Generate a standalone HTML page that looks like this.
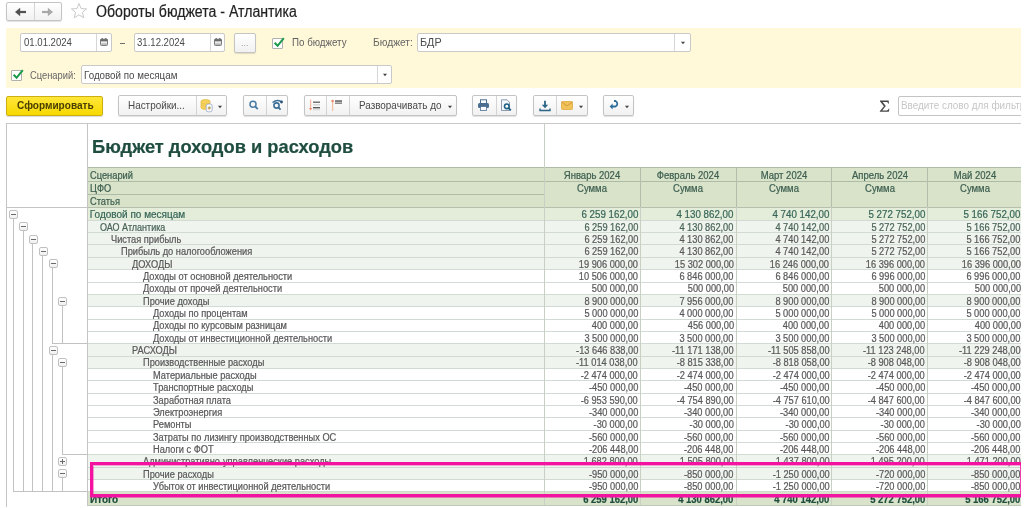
<!DOCTYPE html>
<html><head><meta charset="utf-8"><style>
html,body{margin:0;padding:0;}
body{width:1024px;height:508px;overflow:hidden;background:#fff;position:relative;font-family:"Liberation Sans", sans-serif;}
.a{position:absolute;}
.t{white-space:nowrap;line-height:1;}
.tb .t{-webkit-text-stroke:0.22px currentColor;}
</style></head><body><div id="root" style="position:absolute;left:0;top:0;width:1024px;height:508px;filter:blur(0.3px)">
<div class="a" style="left:6.00px;top:2.00px;width:56.00px;height:19.00px;border:1px solid #c4c4c4;border-radius:2px;background:linear-gradient(#ffffff,#f1f1f1);box-shadow:0 1px 1px rgba(0,0,0,.12);box-sizing:border-box;"></div>
<div class="a" style="left:34.00px;top:3.00px;width:1.00px;height:17.00px;background:#d4d4d4"></div>
<svg class="a" style="left:14px;top:7px" width="13" height="10" viewBox="0 0 13 10"><path d="M12 5H5" stroke="#505050" stroke-width="2.2" fill="none"/><path d="M1 5L6.2 0.8V9.2Z" fill="#505050"/></svg>
<svg class="a" style="left:41px;top:7px" width="13" height="10" viewBox="0 0 13 10"><path d="M1 5H8" stroke="#a8a8a8" stroke-width="2.2" fill="none"/><path d="M12 5L6.8 0.8V9.2Z" fill="#a8a8a8"/></svg>
<svg class="a" style="left:70px;top:2px" width="18" height="18" viewBox="0 0 18 18"><path d="M9 1.5L11.1 6.6L16.6 6.9L12.4 10.4L13.8 15.8L9 12.8L4.2 15.8L5.6 10.4L1.4 6.9L6.9 6.6Z" stroke="#c8c8c8" stroke-width="1" fill="#fff"/></svg>
<div class="a t" style="left:95.90px;top:3.79px;font-size:15.6px;color:#222222;font-weight:400;transform:scaleX(0.905);transform-origin:0 0;-webkit-text-stroke:0.2px #222">Обороты бюджета - Атлантика</div>
<div class="a" style="left:6.25px;top:28.30px;width:1014.75px;height:59.90px;background:#fff8d9"></div>
<div class="a" style="left:20.30px;top:33.00px;width:92.20px;height:18.50px;border:1px solid #c9c9c9;background:#fff;box-sizing:border-box;border-radius:2px;"></div>
<div class="a" style="left:96.00px;top:34.00px;width:1.00px;height:16.50px;background:#d6d6d6"></div>
<div class="a t" style="left:23.50px;top:37.19px;font-size:11px;color:#4a4a4a;font-weight:400;transform:scaleX(0.87);transform-origin:0 0;">01.01.2024</div>
<svg class="a" style="left:100.2px;top:37.6px" width="8" height="8" viewBox="0 0 8 8"><rect x="0.5" y="1.2" width="7" height="6.3" rx="0.8" fill="#fff" stroke="#707070" stroke-width="0.9"/><rect x="0.5" y="1.2" width="7" height="2.2" fill="#6a6a6a"/><rect x="1.6" y="0" width="1.2" height="1.6" fill="#6a6a6a"/><rect x="5.2" y="0" width="1.2" height="1.6" fill="#6a6a6a"/><path d="M1 5.2H7M1 6.5H7" stroke="#9a9a9a" stroke-width="0.7"/></svg>
<div class="a" style="left:120.30px;top:42.60px;width:5.10px;height:1.10px;background:#707070"></div>
<div class="a" style="left:133.80px;top:33.00px;width:91.40px;height:18.50px;border:1px solid #c9c9c9;background:#fff;box-sizing:border-box;border-radius:2px;"></div>
<div class="a" style="left:209.70px;top:34.00px;width:1.00px;height:16.50px;background:#d6d6d6"></div>
<div class="a t" style="left:137.00px;top:37.19px;font-size:11px;color:#4a4a4a;font-weight:400;transform:scaleX(0.87);transform-origin:0 0;">31.12.2024</div>
<svg class="a" style="left:213.9px;top:37.6px" width="8" height="8" viewBox="0 0 8 8"><rect x="0.5" y="1.2" width="7" height="6.3" rx="0.8" fill="#fff" stroke="#707070" stroke-width="0.9"/><rect x="0.5" y="1.2" width="7" height="2.2" fill="#6a6a6a"/><rect x="1.6" y="0" width="1.2" height="1.6" fill="#6a6a6a"/><rect x="5.2" y="0" width="1.2" height="1.6" fill="#6a6a6a"/><path d="M1 5.2H7M1 6.5H7" stroke="#9a9a9a" stroke-width="0.7"/></svg>
<div class="a" style="left:233.80px;top:32.60px;width:21.90px;height:20.00px;border:1px solid #c4c4c4;border-radius:2px;background:linear-gradient(#ffffff,#f1f1f1);box-shadow:0 1px 1px rgba(0,0,0,.12);box-sizing:border-box;"></div>
<div class="a t" style="left:-55.30px;width:600px;text-align:center;top:38.88px;font-size:9px;color:#a0a0a0;font-weight:400;transform:scaleX(1.0);transform-origin:50% 0;">...</div>
<div class="a" style="left:272.00px;top:37.50px;width:11.00px;height:11.00px;border:1px solid #b0b0b0;background:#fff;box-sizing:border-box;border-radius:1px;"></div>
<svg class="a" style="left:272.00px;top:35.50px" width="13" height="13" viewBox="0 0 13 13"><path d="M2.6 6.8L5.6 9.8L11.8 2.2" stroke="#1c9a4c" stroke-width="2.1" fill="none"/></svg>
<div class="a t" style="left:292.20px;top:37.09px;font-size:11px;color:#5f5f5f;font-weight:400;transform:scaleX(0.886);transform-origin:0 0;">По бюджету</div>
<div class="a t" style="left:373.30px;top:37.09px;font-size:11px;color:#666666;font-weight:400;transform:scaleX(0.93);transform-origin:0 0;">Бюджет:</div>
<div class="a" style="left:417.10px;top:33.00px;width:273.90px;height:18.90px;border:1px solid #c9c9c9;background:#fff;box-sizing:border-box;border-radius:2px;"></div>
<div class="a" style="left:673.70px;top:34.00px;width:1.00px;height:16.90px;background:#d6d6d6"></div>
<div class="a t" style="left:420.00px;top:37.09px;font-size:11px;color:#4a4a4a;font-weight:400;transform:scaleX(0.98);transform-origin:0 0;">БДР</div>
<svg class="a" style="left:679.50px;top:40.50px" width="6" height="4" viewBox="0 0 6 4"><path d="M1 0.8H5L3 3.2Z" fill="#404040"/></svg>
<div class="a" style="left:10.50px;top:69.50px;width:11.00px;height:11.00px;border:1px solid #b0b0b0;background:#fff;box-sizing:border-box;border-radius:1px;"></div>
<svg class="a" style="left:10.50px;top:67.50px" width="13" height="13" viewBox="0 0 13 13"><path d="M2.6 6.8L5.6 9.8L11.8 2.2" stroke="#1c9a4c" stroke-width="2.1" fill="none"/></svg>
<div class="a t" style="left:30.30px;top:70.19px;font-size:11px;color:#666666;font-weight:400;transform:scaleX(0.85);transform-origin:0 0;">Сценарий:</div>
<div class="a" style="left:81.00px;top:65.40px;width:310.80px;height:19.00px;border:1px solid #c9c9c9;background:#fff;box-sizing:border-box;border-radius:2px;"></div>
<div class="a" style="left:377.00px;top:66.40px;width:1.00px;height:17.00px;background:#d6d6d6"></div>
<div class="a t" style="left:84.00px;top:70.19px;font-size:11px;color:#4a4a4a;font-weight:400;transform:scaleX(0.89);transform-origin:0 0;">Годовой по месяцам</div>
<svg class="a" style="left:381.70px;top:73.00px" width="6" height="4" viewBox="0 0 6 4"><path d="M1 0.8H5L3 3.2Z" fill="#404040"/></svg>
<div class="a" style="left:6.00px;top:95.50px;width:97.10px;height:20.00px;border:1px solid #cdb010;border-radius:2px;background:linear-gradient(#ffe63a,#f7d900);box-sizing:border-box;box-shadow:0 1px 1px rgba(0,0,0,.15)"></div>
<div class="a t" style="left:16.60px;top:100.12px;font-size:11.2px;color:#4a3f00;font-weight:700;transform:scaleX(0.9);transform-origin:0 0;">Сформировать</div>
<div class="a" style="left:118.30px;top:95.40px;width:109.00px;height:20.20px;border:1px solid #c4c4c4;border-radius:2px;background:linear-gradient(#ffffff,#f1f1f1);box-shadow:0 1px 1px rgba(0,0,0,.12);box-sizing:border-box;"></div>
<div class="a" style="left:196.40px;top:96.00px;width:1.00px;height:19.00px;background:#d3d3d3"></div>
<div class="a t" style="left:128.40px;top:99.99px;font-size:11px;color:#4a4a4a;font-weight:400;transform:scaleX(0.9);transform-origin:0 0;">Настройки...</div>
<svg class="a" style="left:199.5px;top:98.5px" width="14" height="14" viewBox="0 0 14 14"><path d="M1 2.2Q1 0.6 5.5 0.6Q10 0.6 10 2.2V8.8Q10 10.4 5.5 10.4Q1 10.4 1 8.8Z" fill="#f6d25a" stroke="#e2b43c" stroke-width="0.7"/><path d="M1 4.3Q5.5 5.8 10 4.3M1 6.6Q5.5 8.1 10 6.6" stroke="#e8c050" stroke-width="0.8" fill="none"/><rect x="6.2" y="5" width="6" height="7.8" rx="2" fill="#fbfbfd" stroke="#9aa8c8" stroke-width="0.8"/><circle cx="9.2" cy="9" r="1.5" fill="#d9a860"/><path d="M9.2 9V7.5A1.5 1.5 0 0 1 10.7 9Z" fill="#7cb870"/></svg>
<svg class="a" style="left:217.00px;top:104.50px" width="6" height="4" viewBox="0 0 6 4"><path d="M1 0.8H5L3 3.2Z" fill="#404040"/></svg>
<div class="a" style="left:243.20px;top:95.40px;width:44.80px;height:20.20px;border:1px solid #c4c4c4;border-radius:2px;background:linear-gradient(#ffffff,#f1f1f1);box-shadow:0 1px 1px rgba(0,0,0,.12);box-sizing:border-box;"></div>
<div class="a" style="left:265.90px;top:96.00px;width:1.00px;height:19.00px;background:#d3d3d3"></div>
<svg class="a" style="left:248px;top:99px" width="12" height="12" viewBox="0 0 12 12"><circle cx="5" cy="5.2" r="3" stroke="#4a7ca4" stroke-width="1.5" fill="none"/><path d="M7.2 7.5L9.8 10.1" stroke="#4a7ca4" stroke-width="1.8"/></svg>
<svg class="a" style="left:271px;top:99px" width="13" height="12" viewBox="0 0 13 12"><circle cx="5.5" cy="6.5" r="2.6" stroke="#3c6f98" stroke-width="1.6" fill="none"/><path d="M7.3 8.4L9.6 10.7" stroke="#3c6f98" stroke-width="1.8"/><path d="M1.5 3.5Q6 0 10 2.5" stroke="#3c6f98" stroke-width="1.4" fill="none"/><circle cx="10.5" cy="3" r="1.4" fill="#234f78"/></svg>
<div class="a" style="left:303.80px;top:95.40px;width:153.10px;height:20.20px;border:1px solid #c4c4c4;border-radius:2px;background:linear-gradient(#ffffff,#f1f1f1);box-shadow:0 1px 1px rgba(0,0,0,.12);box-sizing:border-box;"></div>
<div class="a" style="left:326.30px;top:96.00px;width:1.00px;height:19.00px;background:#d3d3d3"></div>
<div class="a" style="left:349.30px;top:96.00px;width:1.00px;height:19.00px;background:#d3d3d3"></div>
<svg class="a" style="left:307px;top:98px" width="16" height="14" viewBox="0 0 16 14"><path d="M3.6 1.5V11" stroke="#f4b8a4" stroke-width="1.3"/><path d="M2 10L3.6 12.5L5.2 10Z" fill="#ec8a70"/><rect x="6" y="3.5" width="7" height="1.4" fill="#6a6a6a"/><rect x="6" y="6.2" width="7" height="1.2" fill="#d0d0d0"/><rect x="6" y="9" width="7" height="1.4" fill="#5a5a5a"/><rect x="6" y="11.3" width="7" height="1" fill="#d4d4d4"/></svg>
<svg class="a" style="left:329px;top:98px" width="16" height="14" viewBox="0 0 16 14"><path d="M3.6 3V13" stroke="#f4c0a8" stroke-width="1.3"/><circle cx="3.6" cy="3" r="1.3" fill="#ec8a70"/><rect x="6" y="2.3" width="7" height="1.5" fill="#5a5a5a"/><rect x="6" y="4.4" width="7" height="1.6" fill="#8a8a8a"/></svg>
<div class="a t" style="left:358.90px;top:99.99px;font-size:11px;color:#4a4a4a;font-weight:400;transform:scaleX(0.9);transform-origin:0 0;">Разворачивать до</div>
<svg class="a" style="left:446.50px;top:104.50px" width="6" height="4" viewBox="0 0 6 4"><path d="M1 0.8H5L3 3.2Z" fill="#404040"/></svg>
<div class="a" style="left:472.20px;top:95.40px;width:45.20px;height:20.20px;border:1px solid #c4c4c4;border-radius:2px;background:linear-gradient(#ffffff,#f1f1f1);box-shadow:0 1px 1px rgba(0,0,0,.12);box-sizing:border-box;"></div>
<div class="a" style="left:495.60px;top:96.00px;width:1.00px;height:19.00px;background:#d3d3d3"></div>
<svg class="a" style="left:477px;top:99px" width="13" height="12" viewBox="0 0 13 12"><rect x="3.5" y="0.8" width="6" height="4" fill="#fff" stroke="#4a6f90" stroke-width="1"/><rect x="1" y="4" width="11" height="5" rx="1.5" fill="#4a6f90"/><rect x="3.5" y="7.5" width="6" height="4" fill="#fff" stroke="#4a6f90" stroke-width="0.8"/></svg>
<svg class="a" style="left:500px;top:99px" width="13" height="13" viewBox="0 0 13 13"><path d="M1.5 0.8H7L9.5 3.3V11.5H1.5Z" fill="#f4f7fb" stroke="#8090a8" stroke-width="0.9"/><circle cx="6.8" cy="7.3" r="2.3" stroke="#1f5f85" stroke-width="1.6" fill="#fff"/><path d="M8.5 9L10.8 11.3" stroke="#1f5f85" stroke-width="1.8"/></svg>
<div class="a" style="left:533.30px;top:95.40px;width:54.30px;height:20.20px;border:1px solid #c4c4c4;border-radius:2px;background:linear-gradient(#ffffff,#f1f1f1);box-shadow:0 1px 1px rgba(0,0,0,.12);box-sizing:border-box;"></div>
<div class="a" style="left:556.20px;top:96.00px;width:1.00px;height:19.00px;background:#d3d3d3"></div>
<svg class="a" style="left:538.5px;top:99.5px" width="12" height="12" viewBox="0 0 12 12"><path d="M6 0.8V7" stroke="#2b6484" stroke-width="1.8"/><path d="M2.8 4.8L6 8.2L9.2 4.8Z" fill="#2b6484"/><path d="M1 8.5V10.5H11V8.5" stroke="#2b6484" stroke-width="1.4" fill="none"/></svg>
<svg class="a" style="left:560.5px;top:101px" width="12" height="9" viewBox="0 0 12 9"><rect x="0.5" y="0.5" width="11" height="8" rx="1" fill="#f2c25a" stroke="#e0a840" stroke-width="0.8"/><path d="M0.8 1L6 5L11.2 1" stroke="#c89030" stroke-width="0.8" fill="none"/></svg>
<svg class="a" style="left:577.50px;top:104.50px" width="6" height="4" viewBox="0 0 6 4"><path d="M1 0.8H5L3 3.2Z" fill="#404040"/></svg>
<div class="a" style="left:603.30px;top:95.40px;width:31.00px;height:20.20px;border:1px solid #c4c4c4;border-radius:2px;background:linear-gradient(#ffffff,#f1f1f1);box-shadow:0 1px 1px rgba(0,0,0,.12);box-sizing:border-box;"></div>
<svg class="a" style="left:609px;top:99.5px" width="11" height="11" viewBox="0 0 11 11"><path d="M3 6.5H6.5A3 3 0 0 0 6.5 1H5" stroke="#2e6f9a" stroke-width="1.8" fill="none"/><path d="M0.6 6.5L3.6 3.6V9.4Z" fill="#2e6f9a"/></svg>
<svg class="a" style="left:624.30px;top:104.50px" width="6" height="4" viewBox="0 0 6 4"><path d="M1 0.8H5L3 3.2Z" fill="#404040"/></svg>
<svg class="a" style="left:879px;top:100px" width="11" height="12.5" viewBox="0 0 11 12.5"><path d="M1 0.6H9.6L10 3.4H9.2Q8.8 2 7.4 2H3.6L6.8 6L3.2 10.4H7.8Q9.2 10.4 9.7 8.8H10.4L9.8 11.8H0.8V11.2L4.9 6.2L0.9 1.2Z" fill="#474747"/></svg>
<div class="a" style="left:898.40px;top:95.60px;width:131.60px;height:20.00px;border:1px solid #c4c4c4;border-radius:2px;background:#fff;box-sizing:border-box"></div>
<div class="a t" style="left:901.00px;top:100.19px;font-size:11px;color:#c6c6c6;font-weight:400;transform:scaleX(0.9);transform-origin:0 0;">Введите слово для фильтр</div>
<div class="a tb" style="left:0;top:0;width:1024px;height:508px;clip-path:inset(0 3px 0 0)">
<div class="a" style="left:544.50px;top:167.80px;width:476.50px;height:39.40px;background:#d8e3c9"></div>
<div class="a" style="left:87.40px;top:167.80px;width:457.10px;height:39.40px;background:#d8e3c9"></div>
<div class="a" style="left:87.40px;top:207.20px;width:933.60px;height:13.10px;background:#e3edd9"></div>
<div class="a" style="left:87.40px;top:220.30px;width:933.60px;height:12.34px;background:#eff4ef"></div>
<div class="a" style="left:87.40px;top:232.64px;width:933.60px;height:12.34px;background:#eff4ef"></div>
<div class="a" style="left:87.40px;top:244.98px;width:933.60px;height:12.34px;background:#eff4ef"></div>
<div class="a" style="left:87.40px;top:257.32px;width:933.60px;height:12.34px;background:#eff4ef"></div>
<div class="a" style="left:87.40px;top:269.66px;width:933.60px;height:12.34px;background:#ffffff"></div>
<div class="a" style="left:87.40px;top:282.00px;width:933.60px;height:12.34px;background:#ffffff"></div>
<div class="a" style="left:87.40px;top:294.34px;width:933.60px;height:12.34px;background:#eff4ef"></div>
<div class="a" style="left:87.40px;top:306.68px;width:933.60px;height:12.34px;background:#ffffff"></div>
<div class="a" style="left:87.40px;top:319.02px;width:933.60px;height:12.34px;background:#ffffff"></div>
<div class="a" style="left:87.40px;top:331.36px;width:933.60px;height:12.34px;background:#ffffff"></div>
<div class="a" style="left:87.40px;top:343.70px;width:933.60px;height:12.34px;background:#eff4ef"></div>
<div class="a" style="left:87.40px;top:356.04px;width:933.60px;height:12.34px;background:#eff4ef"></div>
<div class="a" style="left:87.40px;top:368.38px;width:933.60px;height:12.34px;background:#ffffff"></div>
<div class="a" style="left:87.40px;top:380.72px;width:933.60px;height:12.34px;background:#ffffff"></div>
<div class="a" style="left:87.40px;top:393.06px;width:933.60px;height:12.34px;background:#ffffff"></div>
<div class="a" style="left:87.40px;top:405.40px;width:933.60px;height:12.34px;background:#ffffff"></div>
<div class="a" style="left:87.40px;top:417.74px;width:933.60px;height:12.34px;background:#ffffff"></div>
<div class="a" style="left:87.40px;top:430.08px;width:933.60px;height:12.34px;background:#ffffff"></div>
<div class="a" style="left:87.40px;top:442.42px;width:933.60px;height:12.34px;background:#ffffff"></div>
<div class="a" style="left:87.40px;top:454.76px;width:933.60px;height:12.34px;background:#eff4ef"></div>
<div class="a" style="left:87.40px;top:467.10px;width:933.60px;height:12.34px;background:#eff4ef"></div>
<div class="a" style="left:87.40px;top:479.44px;width:933.60px;height:12.34px;background:#ffffff"></div>
<div class="a" style="left:87.40px;top:491.78px;width:933.60px;height:13.52px;background:#d8e3c9"></div>
<div class="a" style="left:6.50px;top:122.50px;width:1014.50px;height:1.00px;background:#c8c8c8"></div>
<div class="a" style="left:87.40px;top:167.30px;width:933.60px;height:1.00px;background:#aebba6"></div>
<div class="a" style="left:87.40px;top:180.50px;width:933.60px;height:1.00px;background:#aebba6"></div>
<div class="a" style="left:87.40px;top:193.70px;width:457.10px;height:1.00px;background:#aebba6"></div>
<div class="a" style="left:6.50px;top:206.70px;width:80.90px;height:1.00px;background:#c4c4c4"></div>
<div class="a" style="left:87.40px;top:206.70px;width:933.60px;height:1.00px;background:#b5bfae"></div>
<div class="a" style="left:87.40px;top:219.80px;width:933.60px;height:1.00px;background:#d2dbd3"></div>
<div class="a" style="left:87.40px;top:232.14px;width:933.60px;height:1.00px;background:#d2dbd3"></div>
<div class="a" style="left:87.40px;top:244.48px;width:933.60px;height:1.00px;background:#d2dbd3"></div>
<div class="a" style="left:87.40px;top:256.82px;width:933.60px;height:1.00px;background:#d2dbd3"></div>
<div class="a" style="left:87.40px;top:269.16px;width:933.60px;height:1.00px;background:#d2dbd3"></div>
<div class="a" style="left:87.40px;top:281.50px;width:933.60px;height:1.00px;background:#d2dbd3"></div>
<div class="a" style="left:87.40px;top:293.84px;width:933.60px;height:1.00px;background:#d2dbd3"></div>
<div class="a" style="left:87.40px;top:306.18px;width:933.60px;height:1.00px;background:#d2dbd3"></div>
<div class="a" style="left:87.40px;top:318.52px;width:933.60px;height:1.00px;background:#d2dbd3"></div>
<div class="a" style="left:87.40px;top:330.86px;width:933.60px;height:1.00px;background:#d2dbd3"></div>
<div class="a" style="left:87.40px;top:343.20px;width:933.60px;height:1.00px;background:#d2dbd3"></div>
<div class="a" style="left:87.40px;top:355.54px;width:933.60px;height:1.00px;background:#d2dbd3"></div>
<div class="a" style="left:87.40px;top:367.88px;width:933.60px;height:1.00px;background:#d2dbd3"></div>
<div class="a" style="left:87.40px;top:380.22px;width:933.60px;height:1.00px;background:#d2dbd3"></div>
<div class="a" style="left:87.40px;top:392.56px;width:933.60px;height:1.00px;background:#d2dbd3"></div>
<div class="a" style="left:87.40px;top:404.90px;width:933.60px;height:1.00px;background:#d2dbd3"></div>
<div class="a" style="left:87.40px;top:417.24px;width:933.60px;height:1.00px;background:#d2dbd3"></div>
<div class="a" style="left:87.40px;top:429.58px;width:933.60px;height:1.00px;background:#d2dbd3"></div>
<div class="a" style="left:87.40px;top:441.92px;width:933.60px;height:1.00px;background:#d2dbd3"></div>
<div class="a" style="left:87.40px;top:454.26px;width:933.60px;height:1.00px;background:#d2dbd3"></div>
<div class="a" style="left:87.40px;top:466.60px;width:933.60px;height:1.00px;background:#d2dbd3"></div>
<div class="a" style="left:87.40px;top:478.94px;width:933.60px;height:1.00px;background:#d2dbd3"></div>
<div class="a" style="left:87.40px;top:491.28px;width:933.60px;height:1.00px;background:#d2dbd3"></div>
<div class="a" style="left:87.40px;top:504.80px;width:933.60px;height:1.00px;background:#c0c8bc"></div>
<div class="a" style="left:6.00px;top:123.00px;width:1.00px;height:383.70px;background:#c4c4c4"></div>
<div class="a" style="left:86.90px;top:123.00px;width:1.00px;height:382.30px;background:#c4c4c4"></div>
<div class="a" style="left:544.00px;top:123.00px;width:1.00px;height:382.30px;background:#c8cfc4"></div>
<div class="a" style="left:639.80px;top:167.80px;width:1.00px;height:337.50px;background:#c8d0c4"></div>
<div class="a" style="left:639.80px;top:167.80px;width:1.00px;height:39.40px;background:#b4bfab"></div>
<div class="a" style="left:735.50px;top:167.80px;width:1.00px;height:337.50px;background:#c8d0c4"></div>
<div class="a" style="left:735.50px;top:167.80px;width:1.00px;height:39.40px;background:#b4bfab"></div>
<div class="a" style="left:831.20px;top:167.80px;width:1.00px;height:337.50px;background:#c8d0c4"></div>
<div class="a" style="left:831.20px;top:167.80px;width:1.00px;height:39.40px;background:#b4bfab"></div>
<div class="a" style="left:926.80px;top:167.80px;width:1.00px;height:337.50px;background:#c8d0c4"></div>
<div class="a" style="left:926.80px;top:167.80px;width:1.00px;height:39.40px;background:#b4bfab"></div>
<div class="a t" style="left:89.50px;top:170.73px;font-size:10px;color:#3d5e50;font-weight:400;transform:scaleX(0.93);transform-origin:0 0;">Сценарий</div>
<div class="a t" style="left:89.50px;top:183.84px;font-size:10px;color:#3d5e50;font-weight:400;transform:scaleX(0.93);transform-origin:0 0;">ЦФО</div>
<div class="a t" style="left:89.50px;top:196.94px;font-size:10px;color:#3d5e50;font-weight:400;transform:scaleX(0.93);transform-origin:0 0;">Статья</div>
<div class="a t" style="left:292.40px;width:600px;text-align:center;top:170.63px;font-size:10px;color:#3d5e50;font-weight:400;transform:scaleX(0.95);transform-origin:50% 0;">Январь 2024</div>
<div class="a t" style="left:292.40px;width:600px;text-align:center;top:184.13px;font-size:10px;color:#3d5e50;font-weight:400;transform:scaleX(0.95);transform-origin:50% 0;">Сумма</div>
<div class="a t" style="left:388.15px;width:600px;text-align:center;top:170.63px;font-size:10px;color:#3d5e50;font-weight:400;transform:scaleX(0.95);transform-origin:50% 0;">Февраль 2024</div>
<div class="a t" style="left:388.15px;width:600px;text-align:center;top:184.13px;font-size:10px;color:#3d5e50;font-weight:400;transform:scaleX(0.95);transform-origin:50% 0;">Сумма</div>
<div class="a t" style="left:483.85px;width:600px;text-align:center;top:170.63px;font-size:10px;color:#3d5e50;font-weight:400;transform:scaleX(0.95);transform-origin:50% 0;">Март 2024</div>
<div class="a t" style="left:483.85px;width:600px;text-align:center;top:184.13px;font-size:10px;color:#3d5e50;font-weight:400;transform:scaleX(0.95);transform-origin:50% 0;">Сумма</div>
<div class="a t" style="left:579.50px;width:600px;text-align:center;top:170.63px;font-size:10px;color:#3d5e50;font-weight:400;transform:scaleX(0.95);transform-origin:50% 0;">Апрель 2024</div>
<div class="a t" style="left:579.50px;width:600px;text-align:center;top:184.13px;font-size:10px;color:#3d5e50;font-weight:400;transform:scaleX(0.95);transform-origin:50% 0;">Сумма</div>
<div class="a t" style="left:675.15px;width:600px;text-align:center;top:170.63px;font-size:10px;color:#3d5e50;font-weight:400;transform:scaleX(0.95);transform-origin:50% 0;">Май 2024</div>
<div class="a t" style="left:675.15px;width:600px;text-align:center;top:184.13px;font-size:10px;color:#3d5e50;font-weight:400;transform:scaleX(0.95);transform-origin:50% 0;">Сумма</div>
<div class="a t" style="left:91.80px;top:137.79px;font-size:18.2px;color:#1f4d3f;font-weight:700;transform:scaleX(1.006);transform-origin:0 0;">Бюджет доходов и расходов</div>
<div class="a t" style="left:89.80px;top:210.33px;font-size:10px;color:#38665a;font-weight:400;transform:scaleX(1.0);transform-origin:0 0;">Годовой по месяцам</div>
<div class="a t" style="right:386.00px;top:210.33px;font-size:10px;color:#38665a;font-weight:400;transform:scaleX(0.975);transform-origin:100% 0;">6 259 162,00</div>
<div class="a t" style="right:290.30px;top:210.33px;font-size:10px;color:#38665a;font-weight:400;transform:scaleX(0.975);transform-origin:100% 0;">4 130 862,00</div>
<div class="a t" style="right:194.60px;top:210.33px;font-size:10px;color:#38665a;font-weight:400;transform:scaleX(0.975);transform-origin:100% 0;">4 740 142,00</div>
<div class="a t" style="right:99.00px;top:210.33px;font-size:10px;color:#38665a;font-weight:400;transform:scaleX(0.975);transform-origin:100% 0;">5 272 752,00</div>
<div class="a t" style="right:3.30px;top:210.33px;font-size:10px;color:#38665a;font-weight:400;transform:scaleX(0.975);transform-origin:100% 0;">5 166 752,00</div>
<div class="a t" style="left:100.35px;top:222.53px;font-size:10px;color:#4a6459;font-weight:400;transform:scaleX(0.9);transform-origin:0 0;">ОАО Атлантика</div>
<div class="a t" style="right:386.00px;top:222.53px;font-size:10px;color:#4a6459;font-weight:400;transform:scaleX(0.925);transform-origin:100% 0;">6 259 162,00</div>
<div class="a t" style="right:290.30px;top:222.53px;font-size:10px;color:#4a6459;font-weight:400;transform:scaleX(0.925);transform-origin:100% 0;">4 130 862,00</div>
<div class="a t" style="right:194.60px;top:222.53px;font-size:10px;color:#4a6459;font-weight:400;transform:scaleX(0.925);transform-origin:100% 0;">4 740 142,00</div>
<div class="a t" style="right:99.00px;top:222.53px;font-size:10px;color:#4a6459;font-weight:400;transform:scaleX(0.925);transform-origin:100% 0;">5 272 752,00</div>
<div class="a t" style="right:3.30px;top:222.53px;font-size:10px;color:#4a6459;font-weight:400;transform:scaleX(0.925);transform-origin:100% 0;">5 166 752,00</div>
<div class="a t" style="left:110.90px;top:235.08px;font-size:10px;color:#595959;font-weight:400;transform:scaleX(0.925);transform-origin:0 0;">Чистая прибыль</div>
<div class="a t" style="right:386.00px;top:235.08px;font-size:10px;color:#595959;font-weight:400;transform:scaleX(0.925);transform-origin:100% 0;">6 259 162,00</div>
<div class="a t" style="right:290.30px;top:235.08px;font-size:10px;color:#595959;font-weight:400;transform:scaleX(0.925);transform-origin:100% 0;">4 130 862,00</div>
<div class="a t" style="right:194.60px;top:235.08px;font-size:10px;color:#595959;font-weight:400;transform:scaleX(0.925);transform-origin:100% 0;">4 740 142,00</div>
<div class="a t" style="right:99.00px;top:235.08px;font-size:10px;color:#595959;font-weight:400;transform:scaleX(0.925);transform-origin:100% 0;">5 272 752,00</div>
<div class="a t" style="right:3.30px;top:235.08px;font-size:10px;color:#595959;font-weight:400;transform:scaleX(0.925);transform-origin:100% 0;">5 166 752,00</div>
<div class="a t" style="left:121.45px;top:247.42px;font-size:10px;color:#595959;font-weight:400;transform:scaleX(0.925);transform-origin:0 0;">Прибыль до налогообложения</div>
<div class="a t" style="right:386.00px;top:247.42px;font-size:10px;color:#595959;font-weight:400;transform:scaleX(0.925);transform-origin:100% 0;">6 259 162,00</div>
<div class="a t" style="right:290.30px;top:247.42px;font-size:10px;color:#595959;font-weight:400;transform:scaleX(0.925);transform-origin:100% 0;">4 130 862,00</div>
<div class="a t" style="right:194.60px;top:247.42px;font-size:10px;color:#595959;font-weight:400;transform:scaleX(0.925);transform-origin:100% 0;">4 740 142,00</div>
<div class="a t" style="right:99.00px;top:247.42px;font-size:10px;color:#595959;font-weight:400;transform:scaleX(0.925);transform-origin:100% 0;">5 272 752,00</div>
<div class="a t" style="right:3.30px;top:247.42px;font-size:10px;color:#595959;font-weight:400;transform:scaleX(0.925);transform-origin:100% 0;">5 166 752,00</div>
<div class="a t" style="left:132.00px;top:259.75px;font-size:10px;color:#595959;font-weight:400;transform:scaleX(0.925);transform-origin:0 0;">ДОХОДЫ</div>
<div class="a t" style="right:386.00px;top:259.75px;font-size:10px;color:#595959;font-weight:400;transform:scaleX(0.925);transform-origin:100% 0;">19 906 000,00</div>
<div class="a t" style="right:290.30px;top:259.75px;font-size:10px;color:#595959;font-weight:400;transform:scaleX(0.925);transform-origin:100% 0;">15 302 000,00</div>
<div class="a t" style="right:194.60px;top:259.75px;font-size:10px;color:#595959;font-weight:400;transform:scaleX(0.925);transform-origin:100% 0;">16 246 000,00</div>
<div class="a t" style="right:99.00px;top:259.75px;font-size:10px;color:#595959;font-weight:400;transform:scaleX(0.925);transform-origin:100% 0;">16 396 000,00</div>
<div class="a t" style="right:3.30px;top:259.75px;font-size:10px;color:#595959;font-weight:400;transform:scaleX(0.925);transform-origin:100% 0;">16 396 000,00</div>
<div class="a t" style="left:142.55px;top:272.10px;font-size:10px;color:#595959;font-weight:400;transform:scaleX(0.925);transform-origin:0 0;">Доходы от основной деятельности</div>
<div class="a t" style="right:386.00px;top:272.10px;font-size:10px;color:#595959;font-weight:400;transform:scaleX(0.925);transform-origin:100% 0;">10 506 000,00</div>
<div class="a t" style="right:290.30px;top:272.10px;font-size:10px;color:#595959;font-weight:400;transform:scaleX(0.925);transform-origin:100% 0;">6 846 000,00</div>
<div class="a t" style="right:194.60px;top:272.10px;font-size:10px;color:#595959;font-weight:400;transform:scaleX(0.925);transform-origin:100% 0;">6 846 000,00</div>
<div class="a t" style="right:99.00px;top:272.10px;font-size:10px;color:#595959;font-weight:400;transform:scaleX(0.925);transform-origin:100% 0;">6 996 000,00</div>
<div class="a t" style="right:3.30px;top:272.10px;font-size:10px;color:#595959;font-weight:400;transform:scaleX(0.925);transform-origin:100% 0;">6 996 000,00</div>
<div class="a t" style="left:142.55px;top:284.44px;font-size:10px;color:#595959;font-weight:400;transform:scaleX(0.925);transform-origin:0 0;">Доходы от прочей деятельности</div>
<div class="a t" style="right:386.00px;top:284.44px;font-size:10px;color:#595959;font-weight:400;transform:scaleX(0.925);transform-origin:100% 0;">500 000,00</div>
<div class="a t" style="right:290.30px;top:284.44px;font-size:10px;color:#595959;font-weight:400;transform:scaleX(0.925);transform-origin:100% 0;">500 000,00</div>
<div class="a t" style="right:194.60px;top:284.44px;font-size:10px;color:#595959;font-weight:400;transform:scaleX(0.925);transform-origin:100% 0;">500 000,00</div>
<div class="a t" style="right:99.00px;top:284.44px;font-size:10px;color:#595959;font-weight:400;transform:scaleX(0.925);transform-origin:100% 0;">500 000,00</div>
<div class="a t" style="right:3.30px;top:284.44px;font-size:10px;color:#595959;font-weight:400;transform:scaleX(0.925);transform-origin:100% 0;">500 000,00</div>
<div class="a t" style="left:142.55px;top:296.78px;font-size:10px;color:#595959;font-weight:400;transform:scaleX(0.925);transform-origin:0 0;">Прочие доходы</div>
<div class="a t" style="right:386.00px;top:296.78px;font-size:10px;color:#595959;font-weight:400;transform:scaleX(0.925);transform-origin:100% 0;">8 900 000,00</div>
<div class="a t" style="right:290.30px;top:296.78px;font-size:10px;color:#595959;font-weight:400;transform:scaleX(0.925);transform-origin:100% 0;">7 956 000,00</div>
<div class="a t" style="right:194.60px;top:296.78px;font-size:10px;color:#595959;font-weight:400;transform:scaleX(0.925);transform-origin:100% 0;">8 900 000,00</div>
<div class="a t" style="right:99.00px;top:296.78px;font-size:10px;color:#595959;font-weight:400;transform:scaleX(0.925);transform-origin:100% 0;">8 900 000,00</div>
<div class="a t" style="right:3.30px;top:296.78px;font-size:10px;color:#595959;font-weight:400;transform:scaleX(0.925);transform-origin:100% 0;">8 900 000,00</div>
<div class="a t" style="left:153.10px;top:309.12px;font-size:10px;color:#595959;font-weight:400;transform:scaleX(0.925);transform-origin:0 0;">Доходы по процентам</div>
<div class="a t" style="right:386.00px;top:309.12px;font-size:10px;color:#595959;font-weight:400;transform:scaleX(0.925);transform-origin:100% 0;">5 000 000,00</div>
<div class="a t" style="right:290.30px;top:309.12px;font-size:10px;color:#595959;font-weight:400;transform:scaleX(0.925);transform-origin:100% 0;">4 000 000,00</div>
<div class="a t" style="right:194.60px;top:309.12px;font-size:10px;color:#595959;font-weight:400;transform:scaleX(0.925);transform-origin:100% 0;">5 000 000,00</div>
<div class="a t" style="right:99.00px;top:309.12px;font-size:10px;color:#595959;font-weight:400;transform:scaleX(0.925);transform-origin:100% 0;">5 000 000,00</div>
<div class="a t" style="right:3.30px;top:309.12px;font-size:10px;color:#595959;font-weight:400;transform:scaleX(0.925);transform-origin:100% 0;">5 000 000,00</div>
<div class="a t" style="left:153.10px;top:321.45px;font-size:10px;color:#595959;font-weight:400;transform:scaleX(0.925);transform-origin:0 0;">Доходы по курсовым разницам</div>
<div class="a t" style="right:386.00px;top:321.45px;font-size:10px;color:#595959;font-weight:400;transform:scaleX(0.925);transform-origin:100% 0;">400 000,00</div>
<div class="a t" style="right:290.30px;top:321.45px;font-size:10px;color:#595959;font-weight:400;transform:scaleX(0.925);transform-origin:100% 0;">456 000,00</div>
<div class="a t" style="right:194.60px;top:321.45px;font-size:10px;color:#595959;font-weight:400;transform:scaleX(0.925);transform-origin:100% 0;">400 000,00</div>
<div class="a t" style="right:99.00px;top:321.45px;font-size:10px;color:#595959;font-weight:400;transform:scaleX(0.925);transform-origin:100% 0;">400 000,00</div>
<div class="a t" style="right:3.30px;top:321.45px;font-size:10px;color:#595959;font-weight:400;transform:scaleX(0.925);transform-origin:100% 0;">400 000,00</div>
<div class="a t" style="left:153.10px;top:333.80px;font-size:10px;color:#595959;font-weight:400;transform:scaleX(0.925);transform-origin:0 0;">Доходы от инвестиционной деятельности</div>
<div class="a t" style="right:386.00px;top:333.80px;font-size:10px;color:#595959;font-weight:400;transform:scaleX(0.925);transform-origin:100% 0;">3 500 000,00</div>
<div class="a t" style="right:290.30px;top:333.80px;font-size:10px;color:#595959;font-weight:400;transform:scaleX(0.925);transform-origin:100% 0;">3 500 000,00</div>
<div class="a t" style="right:194.60px;top:333.80px;font-size:10px;color:#595959;font-weight:400;transform:scaleX(0.925);transform-origin:100% 0;">3 500 000,00</div>
<div class="a t" style="right:99.00px;top:333.80px;font-size:10px;color:#595959;font-weight:400;transform:scaleX(0.925);transform-origin:100% 0;">3 500 000,00</div>
<div class="a t" style="right:3.30px;top:333.80px;font-size:10px;color:#595959;font-weight:400;transform:scaleX(0.925);transform-origin:100% 0;">3 500 000,00</div>
<div class="a t" style="left:132.00px;top:346.14px;font-size:10px;color:#595959;font-weight:400;transform:scaleX(0.925);transform-origin:0 0;">РАСХОДЫ</div>
<div class="a t" style="right:386.00px;top:346.14px;font-size:10px;color:#595959;font-weight:400;transform:scaleX(0.925);transform-origin:100% 0;">-13 646 838,00</div>
<div class="a t" style="right:290.30px;top:346.14px;font-size:10px;color:#595959;font-weight:400;transform:scaleX(0.925);transform-origin:100% 0;">-11 171 138,00</div>
<div class="a t" style="right:194.60px;top:346.14px;font-size:10px;color:#595959;font-weight:400;transform:scaleX(0.925);transform-origin:100% 0;">-11 505 858,00</div>
<div class="a t" style="right:99.00px;top:346.14px;font-size:10px;color:#595959;font-weight:400;transform:scaleX(0.925);transform-origin:100% 0;">-11 123 248,00</div>
<div class="a t" style="right:3.30px;top:346.14px;font-size:10px;color:#595959;font-weight:400;transform:scaleX(0.925);transform-origin:100% 0;">-11 229 248,00</div>
<div class="a t" style="left:142.55px;top:358.48px;font-size:10px;color:#595959;font-weight:400;transform:scaleX(0.925);transform-origin:0 0;">Производственные расходы</div>
<div class="a t" style="right:386.00px;top:358.48px;font-size:10px;color:#595959;font-weight:400;transform:scaleX(0.925);transform-origin:100% 0;">-11 014 038,00</div>
<div class="a t" style="right:290.30px;top:358.48px;font-size:10px;color:#595959;font-weight:400;transform:scaleX(0.925);transform-origin:100% 0;">-8 815 338,00</div>
<div class="a t" style="right:194.60px;top:358.48px;font-size:10px;color:#595959;font-weight:400;transform:scaleX(0.925);transform-origin:100% 0;">-8 818 058,00</div>
<div class="a t" style="right:99.00px;top:358.48px;font-size:10px;color:#595959;font-weight:400;transform:scaleX(0.925);transform-origin:100% 0;">-8 908 048,00</div>
<div class="a t" style="right:3.30px;top:358.48px;font-size:10px;color:#595959;font-weight:400;transform:scaleX(0.925);transform-origin:100% 0;">-8 908 048,00</div>
<div class="a t" style="left:153.10px;top:370.81px;font-size:10px;color:#595959;font-weight:400;transform:scaleX(0.925);transform-origin:0 0;">Материальные расходы</div>
<div class="a t" style="right:386.00px;top:370.81px;font-size:10px;color:#595959;font-weight:400;transform:scaleX(0.925);transform-origin:100% 0;">-2 474 000,00</div>
<div class="a t" style="right:290.30px;top:370.81px;font-size:10px;color:#595959;font-weight:400;transform:scaleX(0.925);transform-origin:100% 0;">-2 474 000,00</div>
<div class="a t" style="right:194.60px;top:370.81px;font-size:10px;color:#595959;font-weight:400;transform:scaleX(0.925);transform-origin:100% 0;">-2 474 000,00</div>
<div class="a t" style="right:99.00px;top:370.81px;font-size:10px;color:#595959;font-weight:400;transform:scaleX(0.925);transform-origin:100% 0;">-2 474 000,00</div>
<div class="a t" style="right:3.30px;top:370.81px;font-size:10px;color:#595959;font-weight:400;transform:scaleX(0.925);transform-origin:100% 0;">-2 474 000,00</div>
<div class="a t" style="left:153.10px;top:383.16px;font-size:10px;color:#595959;font-weight:400;transform:scaleX(0.925);transform-origin:0 0;">Транспортные расходы</div>
<div class="a t" style="right:386.00px;top:383.16px;font-size:10px;color:#595959;font-weight:400;transform:scaleX(0.925);transform-origin:100% 0;">-450 000,00</div>
<div class="a t" style="right:290.30px;top:383.16px;font-size:10px;color:#595959;font-weight:400;transform:scaleX(0.925);transform-origin:100% 0;">-450 000,00</div>
<div class="a t" style="right:194.60px;top:383.16px;font-size:10px;color:#595959;font-weight:400;transform:scaleX(0.925);transform-origin:100% 0;">-450 000,00</div>
<div class="a t" style="right:99.00px;top:383.16px;font-size:10px;color:#595959;font-weight:400;transform:scaleX(0.925);transform-origin:100% 0;">-450 000,00</div>
<div class="a t" style="right:3.30px;top:383.16px;font-size:10px;color:#595959;font-weight:400;transform:scaleX(0.925);transform-origin:100% 0;">-450 000,00</div>
<div class="a t" style="left:153.10px;top:395.50px;font-size:10px;color:#595959;font-weight:400;transform:scaleX(0.925);transform-origin:0 0;">Заработная плата</div>
<div class="a t" style="right:386.00px;top:395.50px;font-size:10px;color:#595959;font-weight:400;transform:scaleX(0.925);transform-origin:100% 0;">-6 953 590,00</div>
<div class="a t" style="right:290.30px;top:395.50px;font-size:10px;color:#595959;font-weight:400;transform:scaleX(0.925);transform-origin:100% 0;">-4 754 890,00</div>
<div class="a t" style="right:194.60px;top:395.50px;font-size:10px;color:#595959;font-weight:400;transform:scaleX(0.925);transform-origin:100% 0;">-4 757 610,00</div>
<div class="a t" style="right:99.00px;top:395.50px;font-size:10px;color:#595959;font-weight:400;transform:scaleX(0.925);transform-origin:100% 0;">-4 847 600,00</div>
<div class="a t" style="right:3.30px;top:395.50px;font-size:10px;color:#595959;font-weight:400;transform:scaleX(0.925);transform-origin:100% 0;">-4 847 600,00</div>
<div class="a t" style="left:153.10px;top:407.83px;font-size:10px;color:#595959;font-weight:400;transform:scaleX(0.925);transform-origin:0 0;">Электроэнергия</div>
<div class="a t" style="right:386.00px;top:407.83px;font-size:10px;color:#595959;font-weight:400;transform:scaleX(0.925);transform-origin:100% 0;">-340 000,00</div>
<div class="a t" style="right:290.30px;top:407.83px;font-size:10px;color:#595959;font-weight:400;transform:scaleX(0.925);transform-origin:100% 0;">-340 000,00</div>
<div class="a t" style="right:194.60px;top:407.83px;font-size:10px;color:#595959;font-weight:400;transform:scaleX(0.925);transform-origin:100% 0;">-340 000,00</div>
<div class="a t" style="right:99.00px;top:407.83px;font-size:10px;color:#595959;font-weight:400;transform:scaleX(0.925);transform-origin:100% 0;">-340 000,00</div>
<div class="a t" style="right:3.30px;top:407.83px;font-size:10px;color:#595959;font-weight:400;transform:scaleX(0.925);transform-origin:100% 0;">-340 000,00</div>
<div class="a t" style="left:153.10px;top:420.18px;font-size:10px;color:#595959;font-weight:400;transform:scaleX(0.925);transform-origin:0 0;">Ремонты</div>
<div class="a t" style="right:386.00px;top:420.18px;font-size:10px;color:#595959;font-weight:400;transform:scaleX(0.925);transform-origin:100% 0;">-30 000,00</div>
<div class="a t" style="right:290.30px;top:420.18px;font-size:10px;color:#595959;font-weight:400;transform:scaleX(0.925);transform-origin:100% 0;">-30 000,00</div>
<div class="a t" style="right:194.60px;top:420.18px;font-size:10px;color:#595959;font-weight:400;transform:scaleX(0.925);transform-origin:100% 0;">-30 000,00</div>
<div class="a t" style="right:99.00px;top:420.18px;font-size:10px;color:#595959;font-weight:400;transform:scaleX(0.925);transform-origin:100% 0;">-30 000,00</div>
<div class="a t" style="right:3.30px;top:420.18px;font-size:10px;color:#595959;font-weight:400;transform:scaleX(0.925);transform-origin:100% 0;">-30 000,00</div>
<div class="a t" style="left:153.10px;top:432.52px;font-size:10px;color:#595959;font-weight:400;transform:scaleX(0.925);transform-origin:0 0;">Затраты по лизингу производственных ОС</div>
<div class="a t" style="right:386.00px;top:432.52px;font-size:10px;color:#595959;font-weight:400;transform:scaleX(0.925);transform-origin:100% 0;">-560 000,00</div>
<div class="a t" style="right:290.30px;top:432.52px;font-size:10px;color:#595959;font-weight:400;transform:scaleX(0.925);transform-origin:100% 0;">-560 000,00</div>
<div class="a t" style="right:194.60px;top:432.52px;font-size:10px;color:#595959;font-weight:400;transform:scaleX(0.925);transform-origin:100% 0;">-560 000,00</div>
<div class="a t" style="right:99.00px;top:432.52px;font-size:10px;color:#595959;font-weight:400;transform:scaleX(0.925);transform-origin:100% 0;">-560 000,00</div>
<div class="a t" style="right:3.30px;top:432.52px;font-size:10px;color:#595959;font-weight:400;transform:scaleX(0.925);transform-origin:100% 0;">-560 000,00</div>
<div class="a t" style="left:153.10px;top:444.86px;font-size:10px;color:#595959;font-weight:400;transform:scaleX(0.925);transform-origin:0 0;">Налоги с ФОТ</div>
<div class="a t" style="right:386.00px;top:444.86px;font-size:10px;color:#595959;font-weight:400;transform:scaleX(0.925);transform-origin:100% 0;">-206 448,00</div>
<div class="a t" style="right:290.30px;top:444.86px;font-size:10px;color:#595959;font-weight:400;transform:scaleX(0.925);transform-origin:100% 0;">-206 448,00</div>
<div class="a t" style="right:194.60px;top:444.86px;font-size:10px;color:#595959;font-weight:400;transform:scaleX(0.925);transform-origin:100% 0;">-206 448,00</div>
<div class="a t" style="right:99.00px;top:444.86px;font-size:10px;color:#595959;font-weight:400;transform:scaleX(0.925);transform-origin:100% 0;">-206 448,00</div>
<div class="a t" style="right:3.30px;top:444.86px;font-size:10px;color:#595959;font-weight:400;transform:scaleX(0.925);transform-origin:100% 0;">-206 448,00</div>
<div class="a t" style="left:142.55px;top:457.19px;font-size:10px;color:#595959;font-weight:400;transform:scaleX(0.925);transform-origin:0 0;">Административно-управленческие расходы</div>
<div class="a t" style="right:386.00px;top:457.19px;font-size:10px;color:#595959;font-weight:400;transform:scaleX(0.925);transform-origin:100% 0;">-1 682 800,00</div>
<div class="a t" style="right:290.30px;top:457.19px;font-size:10px;color:#595959;font-weight:400;transform:scaleX(0.925);transform-origin:100% 0;">-1 505 800,00</div>
<div class="a t" style="right:194.60px;top:457.19px;font-size:10px;color:#595959;font-weight:400;transform:scaleX(0.925);transform-origin:100% 0;">-1 437 800,00</div>
<div class="a t" style="right:99.00px;top:457.19px;font-size:10px;color:#595959;font-weight:400;transform:scaleX(0.925);transform-origin:100% 0;">-1 495 200,00</div>
<div class="a t" style="right:3.30px;top:457.19px;font-size:10px;color:#595959;font-weight:400;transform:scaleX(0.925);transform-origin:100% 0;">-1 471 200,00</div>
<div class="a t" style="left:142.55px;top:469.54px;font-size:10px;color:#595959;font-weight:400;transform:scaleX(0.925);transform-origin:0 0;">Прочие расходы</div>
<div class="a t" style="right:386.00px;top:469.54px;font-size:10px;color:#595959;font-weight:400;transform:scaleX(0.925);transform-origin:100% 0;">-950 000,00</div>
<div class="a t" style="right:290.30px;top:469.54px;font-size:10px;color:#595959;font-weight:400;transform:scaleX(0.925);transform-origin:100% 0;">-850 000,00</div>
<div class="a t" style="right:194.60px;top:469.54px;font-size:10px;color:#595959;font-weight:400;transform:scaleX(0.925);transform-origin:100% 0;">-1 250 000,00</div>
<div class="a t" style="right:99.00px;top:469.54px;font-size:10px;color:#595959;font-weight:400;transform:scaleX(0.925);transform-origin:100% 0;">-720 000,00</div>
<div class="a t" style="right:3.30px;top:469.54px;font-size:10px;color:#595959;font-weight:400;transform:scaleX(0.925);transform-origin:100% 0;">-850 000,00</div>
<div class="a t" style="left:153.10px;top:481.88px;font-size:10px;color:#595959;font-weight:400;transform:scaleX(0.925);transform-origin:0 0;">Убыток от инвестиционной деятельности</div>
<div class="a t" style="right:386.00px;top:481.88px;font-size:10px;color:#595959;font-weight:400;transform:scaleX(0.925);transform-origin:100% 0;">-950 000,00</div>
<div class="a t" style="right:290.30px;top:481.88px;font-size:10px;color:#595959;font-weight:400;transform:scaleX(0.925);transform-origin:100% 0;">-850 000,00</div>
<div class="a t" style="right:194.60px;top:481.88px;font-size:10px;color:#595959;font-weight:400;transform:scaleX(0.925);transform-origin:100% 0;">-1 250 000,00</div>
<div class="a t" style="right:99.00px;top:481.88px;font-size:10px;color:#595959;font-weight:400;transform:scaleX(0.925);transform-origin:100% 0;">-720 000,00</div>
<div class="a t" style="right:3.30px;top:481.88px;font-size:10px;color:#595959;font-weight:400;transform:scaleX(0.925);transform-origin:100% 0;">-850 000,00</div>
<div class="a t" style="left:90.00px;top:494.29px;font-size:10.5px;color:#1e4d3c;font-weight:700;transform:scaleX(0.95);transform-origin:0 0;">Итого</div>
<div class="a t" style="right:386.00px;top:494.29px;font-size:10.5px;color:#1e4d3c;font-weight:700;transform:scaleX(0.9);transform-origin:100% 0;">6 259 162,00</div>
<div class="a t" style="right:290.30px;top:494.29px;font-size:10.5px;color:#1e4d3c;font-weight:700;transform:scaleX(0.9);transform-origin:100% 0;">4 130 862,00</div>
<div class="a t" style="right:194.60px;top:494.29px;font-size:10.5px;color:#1e4d3c;font-weight:700;transform:scaleX(0.9);transform-origin:100% 0;">4 740 142,00</div>
<div class="a t" style="right:99.00px;top:494.29px;font-size:10.5px;color:#1e4d3c;font-weight:700;transform:scaleX(0.9);transform-origin:100% 0;">5 272 752,00</div>
<div class="a t" style="right:3.30px;top:494.29px;font-size:10.5px;color:#1e4d3c;font-weight:700;transform:scaleX(0.9);transform-origin:100% 0;">5 166 752,00</div>
<div class="a" style="left:12.50px;top:216.75px;width:1.00px;height:275.03px;background:#c2c2c2"></div>
<div class="a" style="left:22.50px;top:229.47px;width:1.00px;height:262.31px;background:#c2c2c2"></div>
<div class="a" style="left:32.40px;top:241.81px;width:1.00px;height:249.97px;background:#c2c2c2"></div>
<div class="a" style="left:42.30px;top:254.15px;width:1.00px;height:237.63px;background:#c2c2c2"></div>
<div class="a" style="left:52.10px;top:266.49px;width:1.00px;height:77.21px;background:#c2c2c2"></div>
<div class="a" style="left:61.90px;top:303.51px;width:1.00px;height:40.19px;background:#c2c2c2"></div>
<div class="a" style="left:52.10px;top:352.87px;width:1.00px;height:138.91px;background:#c2c2c2"></div>
<div class="a" style="left:61.90px;top:365.21px;width:1.00px;height:89.55px;background:#c2c2c2"></div>
<div class="a" style="left:61.90px;top:476.27px;width:1.00px;height:15.51px;background:#c2c2c2"></div>
<div class="a" style="left:52.60px;top:343.20px;width:34.80px;height:1.00px;background:#c2c2c2"></div>
<div class="a" style="left:62.40px;top:454.26px;width:25.00px;height:1.00px;background:#c2c2c2"></div>
<div class="a" style="left:13.00px;top:491.28px;width:74.40px;height:1.00px;background:#c2c2c2"></div>
<div class="a" style="left:9.00px;top:210.00px;width:9.00px;height:9.00px;border:1px solid #c0c0c0;border-radius:2px;background:linear-gradient(#fff,#f0f0f0);box-sizing:border-box"></div>
<div class="a" style="left:11.00px;top:214.00px;width:5.00px;height:1.00px;background:#6a6a6a"></div>
<div class="a" style="left:19.00px;top:222.00px;width:9.00px;height:9.00px;border:1px solid #c0c0c0;border-radius:2px;background:linear-gradient(#fff,#f0f0f0);box-sizing:border-box"></div>
<div class="a" style="left:21.00px;top:226.00px;width:5.00px;height:1.00px;background:#6a6a6a"></div>
<div class="a" style="left:29.00px;top:235.00px;width:9.00px;height:9.00px;border:1px solid #c0c0c0;border-radius:2px;background:linear-gradient(#fff,#f0f0f0);box-sizing:border-box"></div>
<div class="a" style="left:31.00px;top:239.00px;width:5.00px;height:1.00px;background:#6a6a6a"></div>
<div class="a" style="left:39.00px;top:247.00px;width:9.00px;height:9.00px;border:1px solid #c0c0c0;border-radius:2px;background:linear-gradient(#fff,#f0f0f0);box-sizing:border-box"></div>
<div class="a" style="left:41.00px;top:251.00px;width:5.00px;height:1.00px;background:#6a6a6a"></div>
<div class="a" style="left:49.00px;top:259.00px;width:9.00px;height:9.00px;border:1px solid #c0c0c0;border-radius:2px;background:linear-gradient(#fff,#f0f0f0);box-sizing:border-box"></div>
<div class="a" style="left:51.00px;top:263.00px;width:5.00px;height:1.00px;background:#6a6a6a"></div>
<div class="a" style="left:58.00px;top:297.00px;width:9.00px;height:9.00px;border:1px solid #c0c0c0;border-radius:2px;background:linear-gradient(#fff,#f0f0f0);box-sizing:border-box"></div>
<div class="a" style="left:60.00px;top:301.00px;width:5.00px;height:1.00px;background:#6a6a6a"></div>
<div class="a" style="left:49.00px;top:346.00px;width:9.00px;height:9.00px;border:1px solid #c0c0c0;border-radius:2px;background:linear-gradient(#fff,#f0f0f0);box-sizing:border-box"></div>
<div class="a" style="left:51.00px;top:350.00px;width:5.00px;height:1.00px;background:#6a6a6a"></div>
<div class="a" style="left:58.00px;top:358.00px;width:9.00px;height:9.00px;border:1px solid #c0c0c0;border-radius:2px;background:linear-gradient(#fff,#f0f0f0);box-sizing:border-box"></div>
<div class="a" style="left:60.00px;top:362.00px;width:5.00px;height:1.00px;background:#6a6a6a"></div>
<div class="a" style="left:58.00px;top:457.00px;width:9.00px;height:9.00px;border:1px solid #c0c0c0;border-radius:2px;background:linear-gradient(#fff,#f0f0f0);box-sizing:border-box"></div>
<div class="a" style="left:60.00px;top:461.00px;width:5.00px;height:1.00px;background:#6a6a6a"></div>
<div class="a" style="left:62.00px;top:459.00px;width:1.00px;height:5.00px;background:#6a6a6a"></div>
<div class="a" style="left:58.00px;top:469.00px;width:9.00px;height:9.00px;border:1px solid #c0c0c0;border-radius:2px;background:linear-gradient(#fff,#f0f0f0);box-sizing:border-box"></div>
<div class="a" style="left:60.00px;top:473.00px;width:5.00px;height:1.00px;background:#6a6a6a"></div>
</div>
<div class="a" style="left:90.00px;top:462.00px;width:931.00px;height:3.00px;background:#f412a0"></div>
<div class="a" style="left:93.00px;top:465.00px;width:928.00px;height:1.00px;background:#f412a0;opacity:.35"></div>
<div class="a" style="left:90.00px;top:494.00px;width:931.00px;height:3.00px;background:#f412a0"></div>
<div class="a" style="left:90.00px;top:497.00px;width:931.00px;height:1.00px;background:#f412a0;opacity:.5"></div>
<div class="a" style="left:90.00px;top:465.00px;width:3.00px;height:29.00px;background:#f412a0"></div>
<div class="a" style="left:93.00px;top:466.00px;width:1.00px;height:28.00px;background:#f412a0;opacity:.4"></div>
<div class="a" style="left:1020.00px;top:465.00px;width:1.00px;height:29.00px;background:#f412a0;opacity:.8"></div>
<div class="a" style="left:1021.10px;top:0.00px;width:2.90px;height:508.00px;background:#fff"></div>
</div></body></html>
